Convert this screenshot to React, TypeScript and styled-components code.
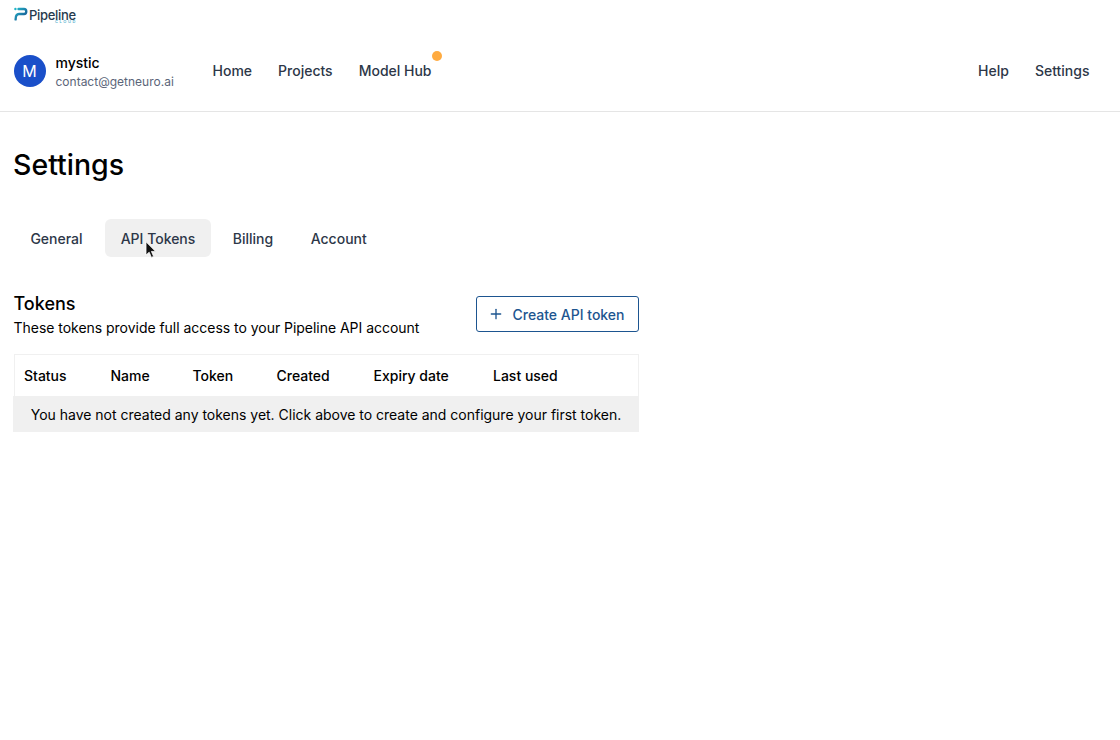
import React from "react";
import styled, { createGlobalStyle } from "styled-components";
import { Plus } from "lucide-react";

const Global = createGlobalStyle`
  html, body { margin: 0; padding: 0; background: #fff; }
  body { font-family: Inter, "Liberation Sans", sans-serif; color: #000; }
  * { box-sizing: border-box; }
`;

const Page = styled.div`
  width: 1120px;
  height: 740px;
  overflow: hidden;
`;

const TopBar = styled.header`
  height: 112px;
  border-bottom: 1px solid #e5e5e5;
  display: flex;
  flex-direction: column;
`;

const LogoRow = styled.div`
  height: 30px;
  padding: 6px 0 0 14px;
  display: flex;
  align-items: flex-start;
`;

const LogoWrap = styled.div`
  position: relative;
  display: flex;
  align-items: flex-start;
  gap: 1px;
  height: 18px;
`;

const LogoSvg = styled.svg`
  margin-top: 0.5px;
  flex: none;
`;

const LogoWord = styled.span`
  margin-top: 3.5px;
  font-size: 13px;
  font-weight: 500;
  line-height: 10px;
  letter-spacing: -0.3px;
  color: #263a4d;
`;

const LogoSub = styled.span`
  position: absolute;
  left: 41px;
  top: 14px;
  font-size: 4px;
  line-height: 3px;
  letter-spacing: 1.6px;
  font-weight: 600;
  color: #5fb4d0;
`;

const Nav = styled.nav`
  flex: 1;
  display: flex;
  align-items: center;
  padding: 0 30.5px 0 13.5px;
`;

const Avatar = styled.div`
  width: 32px;
  height: 32px;
  border-radius: 50%;
  background: #1a4fc9;
  color: #fff;
  font-size: 16px;
  display: flex;
  align-items: center;
  justify-content: center;
`;

const Identity = styled.div`
  margin-left: 10px;
  width: 157px;
  padding-top: 3px;
  display: flex;
  flex-direction: column;
`;

const UserName = styled.span`
  font-size: 14px;
  font-weight: 500;
  line-height: 18px;
`;

const UserEmail = styled.span`
  margin-top: 1px;
  font-size: 12px;
  line-height: 18px;
  color: #5b6579;
`;

const NavLinks = styled.div`
  display: flex;
  gap: 26px;
`;

const NavLink = styled.a`
  position: relative;
  font-size: 14px;
  font-weight: 500;
  line-height: 20px;
  color: #2d3748;
`;

const Dot = styled.span`
  position: absolute;
  right: -10px;
  top: -10px;
  width: 10px;
  height: 10px;
  border-radius: 50%;
  background: #ffab40;
`;

const Spacer = styled.div`
  flex: 1;
`;

const Main = styled.main`
  padding: 0 0 0 13px;
`;

const Title = styled.h1`
  margin: 35px 0 0;
  font-size: 28.5px;
  font-weight: 500;
  line-height: 36px;
`;

const Tabs = styled.div`
  margin: 36px 0 0 1px;
  display: flex;
`;

const Tab = styled.div<{ $active?: boolean; $w: number }>`
  width: ${(p) => p.$w}px;
  height: 38px;
  border-radius: 6px;
  display: flex;
  align-items: center;
  justify-content: center;
  font-size: 14px;
  font-weight: 500;
  color: #2d3748;
  background: ${(p) => (p.$active ? "#f0f0f0" : "transparent")};
  &:first-child {
    margin-right: 6px;
  }
`;

const Section = styled.section`
  width: 626px;
  margin-top: 39px;
`;

const SectionHead = styled.div`
  display: flex;
  justify-content: space-between;
  align-items: flex-start;
  padding-left: 0.5px;
`;

const SectionTitle = styled.h2`
  margin: -3px 0 0;
  font-size: 18px;
  font-weight: 500;
  line-height: 22px;
`;

const SectionText = styled.p`
  margin: 4px 0 0;
  font-size: 14px;
  line-height: 18px;
  letter-spacing: -0.03px;
`;

const CreateButton = styled.button`
  width: 163px;
  height: 36px;
  border: 1px solid #1d5590;
  border-radius: 3px;
  background: #fff;
  color: #1d5590;
  font: 500 14px Inter, sans-serif;
  display: flex;
  align-items: center;
  gap: 8.5px;
  padding: 0 0 0 11px;
`;

const Table = styled.div`
  margin: 17px 0 0 1px;
  border: 1px solid #f0f0f0;
  border-bottom: 0;
`;

const HeadRow = styled.div`
  height: 41px;
  display: flex;
  align-items: center;
`;

const HeadCell = styled.span<{ $w: number }>`
  width: ${(p) => p.$w}px;
  font-size: 14px;
  font-weight: 500;
  padding-left: 9px;
  flex: none;
`;

const EmptyRow = styled.div`
  height: 36px;
  margin: 0 -1px 0 -2px;
  background: #f0f0f0;
  display: flex;
  align-items: center;
  justify-content: center;
  font-size: 14px;
  letter-spacing: -0.01px;
`;

const LogoMark = () => (
  <LogoSvg width="14" height="14" viewBox="0 0 14 14" fill="none">
    <defs>
      <linearGradient id="lg" x1="0" y1="0" x2="1" y2="1">
        <stop offset="0" stopColor="#22b5c8" />
        <stop offset="1" stopColor="#174a8c" />
      </linearGradient>
    </defs>
    <path d="M4.5 2H10C13 2 13 7 10 7H5C2.4 7 1.6 8.6 1.6 12.4" stroke="url(#lg)" strokeWidth="2.4" strokeLinecap="round" />
    <circle cx="1.4" cy="2" r="1.2" fill="#22b5c8" />
  </LogoSvg>
);

const Cursor = styled.svg`
  position: absolute;
  left: 145px;
  top: 241px;
`;

export default function App() {
  return (
    <Page>
      <Global />
      <TopBar>
        <LogoRow>
          <LogoWrap>
            <LogoMark />
            <LogoWord>Pipeline</LogoWord>
            <LogoSub>CLOUD</LogoSub>
          </LogoWrap>
        </LogoRow>
        <Nav>
          <Avatar>M</Avatar>
          <Identity>
            <UserName>mystic</UserName>
            <UserEmail>contact@getneuro.ai</UserEmail>
          </Identity>
          <NavLinks>
            <NavLink>Home</NavLink>
            <NavLink>Projects</NavLink>
            <NavLink>
              Model Hub
              <Dot />
            </NavLink>
          </NavLinks>
          <Spacer />
          <NavLinks>
            <NavLink>Help</NavLink>
            <NavLink>Settings</NavLink>
          </NavLinks>
        </Nav>
      </TopBar>
      <Main>
        <Title>Settings</Title>
        <Tabs>
          <Tab $w={85}>General</Tab>
          <Tab $w={106} $active>API Tokens</Tab>
          <Tab $w={84}>Billing</Tab>
          <Tab $w={87.5}>Account</Tab>
        </Tabs>
        <Section>
          <SectionHead>
            <div>
              <SectionTitle>Tokens</SectionTitle>
              <SectionText>These tokens provide full access to your Pipeline API account</SectionText>
            </div>
            <CreateButton>
              <Plus size={16} strokeWidth={2} />
              Create API token
            </CreateButton>
          </SectionHead>
          <Table>
            <HeadRow>
              <HeadCell $w={86.5}>Status</HeadCell>
              <HeadCell $w={82}>Name</HeadCell>
              <HeadCell $w={84}>Token</HeadCell>
              <HeadCell $w={97}>Created</HeadCell>
              <HeadCell $w={119.5}>Expiry date</HeadCell>
              <HeadCell $w={120}>Last used</HeadCell>
            </HeadRow>
            <EmptyRow>You have not created any tokens yet. Click above to create and configure your first token.</EmptyRow>
          </Table>
        </Section>
      </Main>
      <Cursor width="12" height="18" viewBox="0 0 12 18">
        <path d="M1 0.8V14L4.2 11.2L6.4 16.4L8.6 15.4L6.4 10.4H10.6Z" fill="#111" stroke="#fff" strokeWidth="0.8" />
      </Cursor>
    </Page>
  );
}
